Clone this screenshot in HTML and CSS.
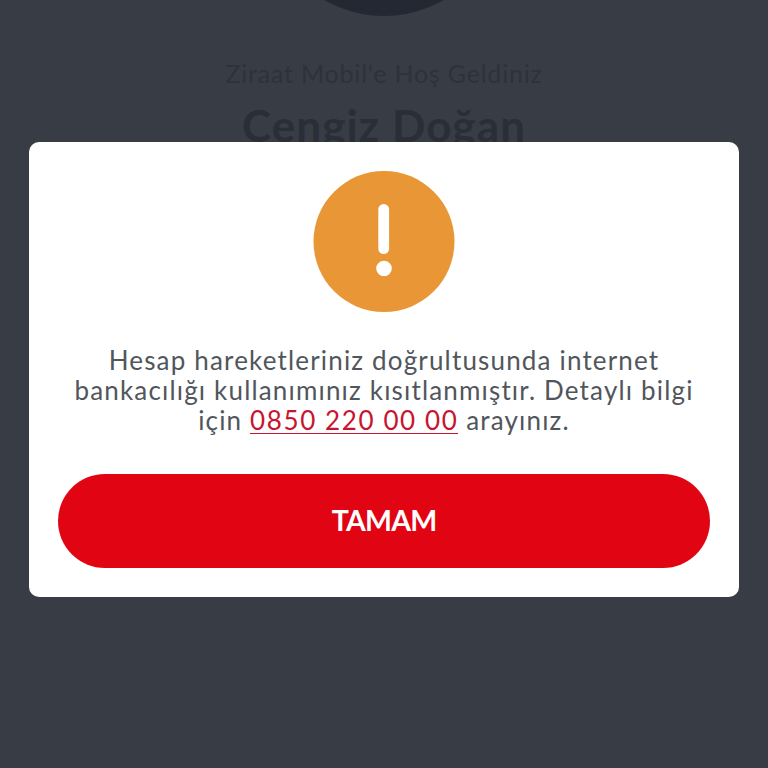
FILE: index.html
```html
<!DOCTYPE html>
<html lang="tr">
<head>
	<meta charset="UTF-8">
	<title>Ziraat Mobil</title>
	<link rel="stylesheet" href="styles.css">
</head>
<body>
	<div class="page">
		<div class="avatar"></div>
		<p class="welcome">Ziraat Mobil'e Hoş Geldiniz</p>
		<h1 class="name">Cengiz Doğan</h1>
	</div>
	<div class="modal">
		<svg class="modal-icon" viewBox="0 0 142 141" aria-hidden="true">
			<circle cx="71" cy="70.5" r="70.5" fill="#e99736"/>
			<rect x="65.3" y="33" width="10.8" height="50" rx="5.4" fill="#fff"/>
			<circle cx="71" cy="97.5" r="7.8" fill="#fff"/>
		</svg>
		<div class="modal-text">
			<p class="modal-line">Hesap hareketleriniz doğrultusunda internet</p>
			<p class="modal-line">bankacılığı kullanımınız kısıtlanmıştır. Detaylı bilgi</p>
			<p class="modal-line">için <a class="phone" href="#">0850 220 00 00</a> arayınız.</p>
		</div>
		<button class="modal-btn" type="button">TAMAM</button>
	</div>
</body>
</html>
```

FILE: styles.css
```css
html,
body,
p,
h1 {
	margin: 0;
	padding: 0;
}
body {
	position: relative;
	width: 768px;
	height: 768px;
	overflow: hidden;
	background: #383c45;
	font-family: "Lato", "Liberation Sans", sans-serif;
}
.page {
	display: flex;
	flex-direction: column;
	align-items: center;
}
.avatar {
	width: 240px;
	height: 240px;
	margin-top: -224px;
	border-radius: 50%;
	background: #232833;
}
.welcome {
	margin-top: 41px;
	font-size: 25px;
	line-height: 32px;
	letter-spacing: 0.8px;
	color: #2e323b;
}
.name {
	margin-top: 9px;
	font-size: 44px;
	line-height: 54px;
	font-weight: 700;
	letter-spacing: 1.1px;
	color: #2a2e37;
}
.modal {
	position: absolute;
	top: 142px;
	left: 29px;
	box-sizing: border-box;
	width: 710px;
	height: 455px;
	padding: 29px;
	display: flex;
	flex-direction: column;
	align-items: center;
	background: #fff;
	border-radius: 10px;
}
.modal-icon {
	display: block;
	width: 142px;
	height: 141px;
	flex: none;
}
.modal-text {
	margin-top: 33px;
	font-size: 26px;
	letter-spacing: 1.17px;
	text-align: center;
	color: #51565c;
	white-space: nowrap;
}
.modal-line {
	height: 30px;
	line-height: 30px;
}
.phone {
	display: inline-block;
	line-height: 26px;
	letter-spacing: 1.6px;
	color: #c8142f;
	text-decoration: none;
	border-bottom: 1px solid #c8142f;
}
.modal-btn {
	margin-top: 39px;
	width: 652px;
	height: 94px;
	flex: none;
	padding: 0 0 3px;
	border: none;
	border-radius: 47px;
	background: #e10412;
	color: #fff;
	font-family: inherit;
	font-size: 28.5px;
	font-weight: 700;
	letter-spacing: -0.8px;
}
```
